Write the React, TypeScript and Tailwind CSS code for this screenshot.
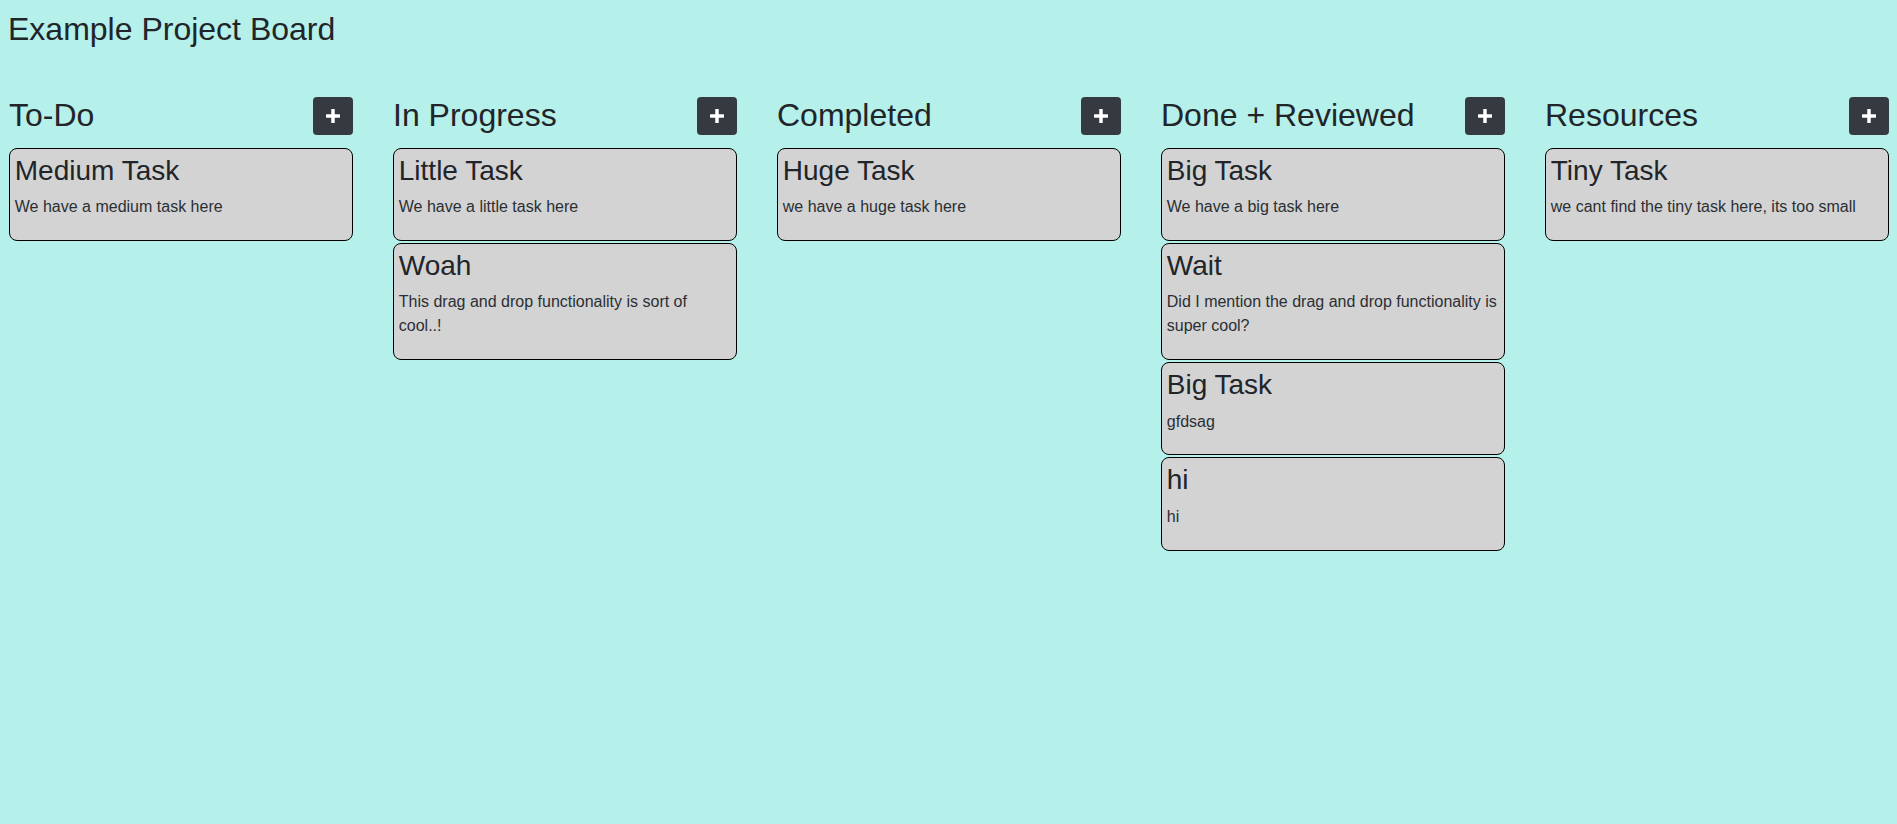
const columns = [
  {
    title: "To-Do",
    tasks: [{ title: "Medium Task", body: "We have a medium task here" }],
  },
  {
    title: "In Progress",
    tasks: [
      { title: "Little Task", body: "We have a little task here" },
      { title: "Woah", body: "This drag and drop functionality is sort of cool..!" },
    ],
  },
  {
    title: "Completed",
    tasks: [{ title: "Huge Task", body: "we have a huge task here" }],
  },
  {
    title: "Done + Reviewed",
    tasks: [
      { title: "Big Task", body: "We have a big task here" },
      { title: "Wait", body: "Did I mention the drag and drop functionality is super cool?" },
      { title: "Big Task", body: "gfdsag" },
      { title: "hi", body: "hi" },
    ],
  },
  {
    title: "Resources",
    tasks: [{ title: "Tiny Task", body: "we cant find the tiny task here, its too small" }],
  },
];

function PlusIcon() {
  return (
    <svg width="14" height="14" viewBox="0 0 14 14" fill="#ffffff">
      <rect x="5.25" y="0" width="3.5" height="14" rx="0.6" />
      <rect x="0" y="5.25" width="14" height="3.5" rx="0.6" />
    </svg>
  );
}

export default function App() {
  return (
    <div
      className="min-h-screen w-full bg-[#b5f0ea] px-[9px] pt-[10px] text-[#212529]"
      style={{ fontFamily: '"Liberation Sans", Arial, sans-serif' }}
    >
      <h1 className="text-[32px] leading-[1.2] -ml-px">Example Project Board</h1>

      <div className="mt-[48px] flex gap-[40px]">
        {columns.map((column, index) => (
          <div className="w-[344px] shrink-0" key={index.toString()}>
            {/* Column header */}
            <div className="flex items-center justify-between">
              <h2 className="text-[32px] leading-[1.2]">{column.title}</h2>
              <button className="flex h-[38px] w-[40px] items-center justify-center rounded bg-[#343a40]">
                <PlusIcon />
              </button>
            </div>

            {/* Cards */}
            <div className="mt-[13px] flex flex-col gap-[2px]">
              {column.tasks.map((task, i) => (
                <div
                  className="rounded-lg border border-black bg-[#d3d3d3] p-[4.8px]"
                  key={i.toString()}
                >
                  <h3 className="mb-2 text-[28px] leading-[1.2]">{task.title}</h3>
                  <p className="mb-4 text-[16px] leading-[24px] text-[#2b2f33]">{task.body}</p>
                </div>
              ))}
            </div>
          </div>
        ))}
      </div>
    </div>
  );
}
